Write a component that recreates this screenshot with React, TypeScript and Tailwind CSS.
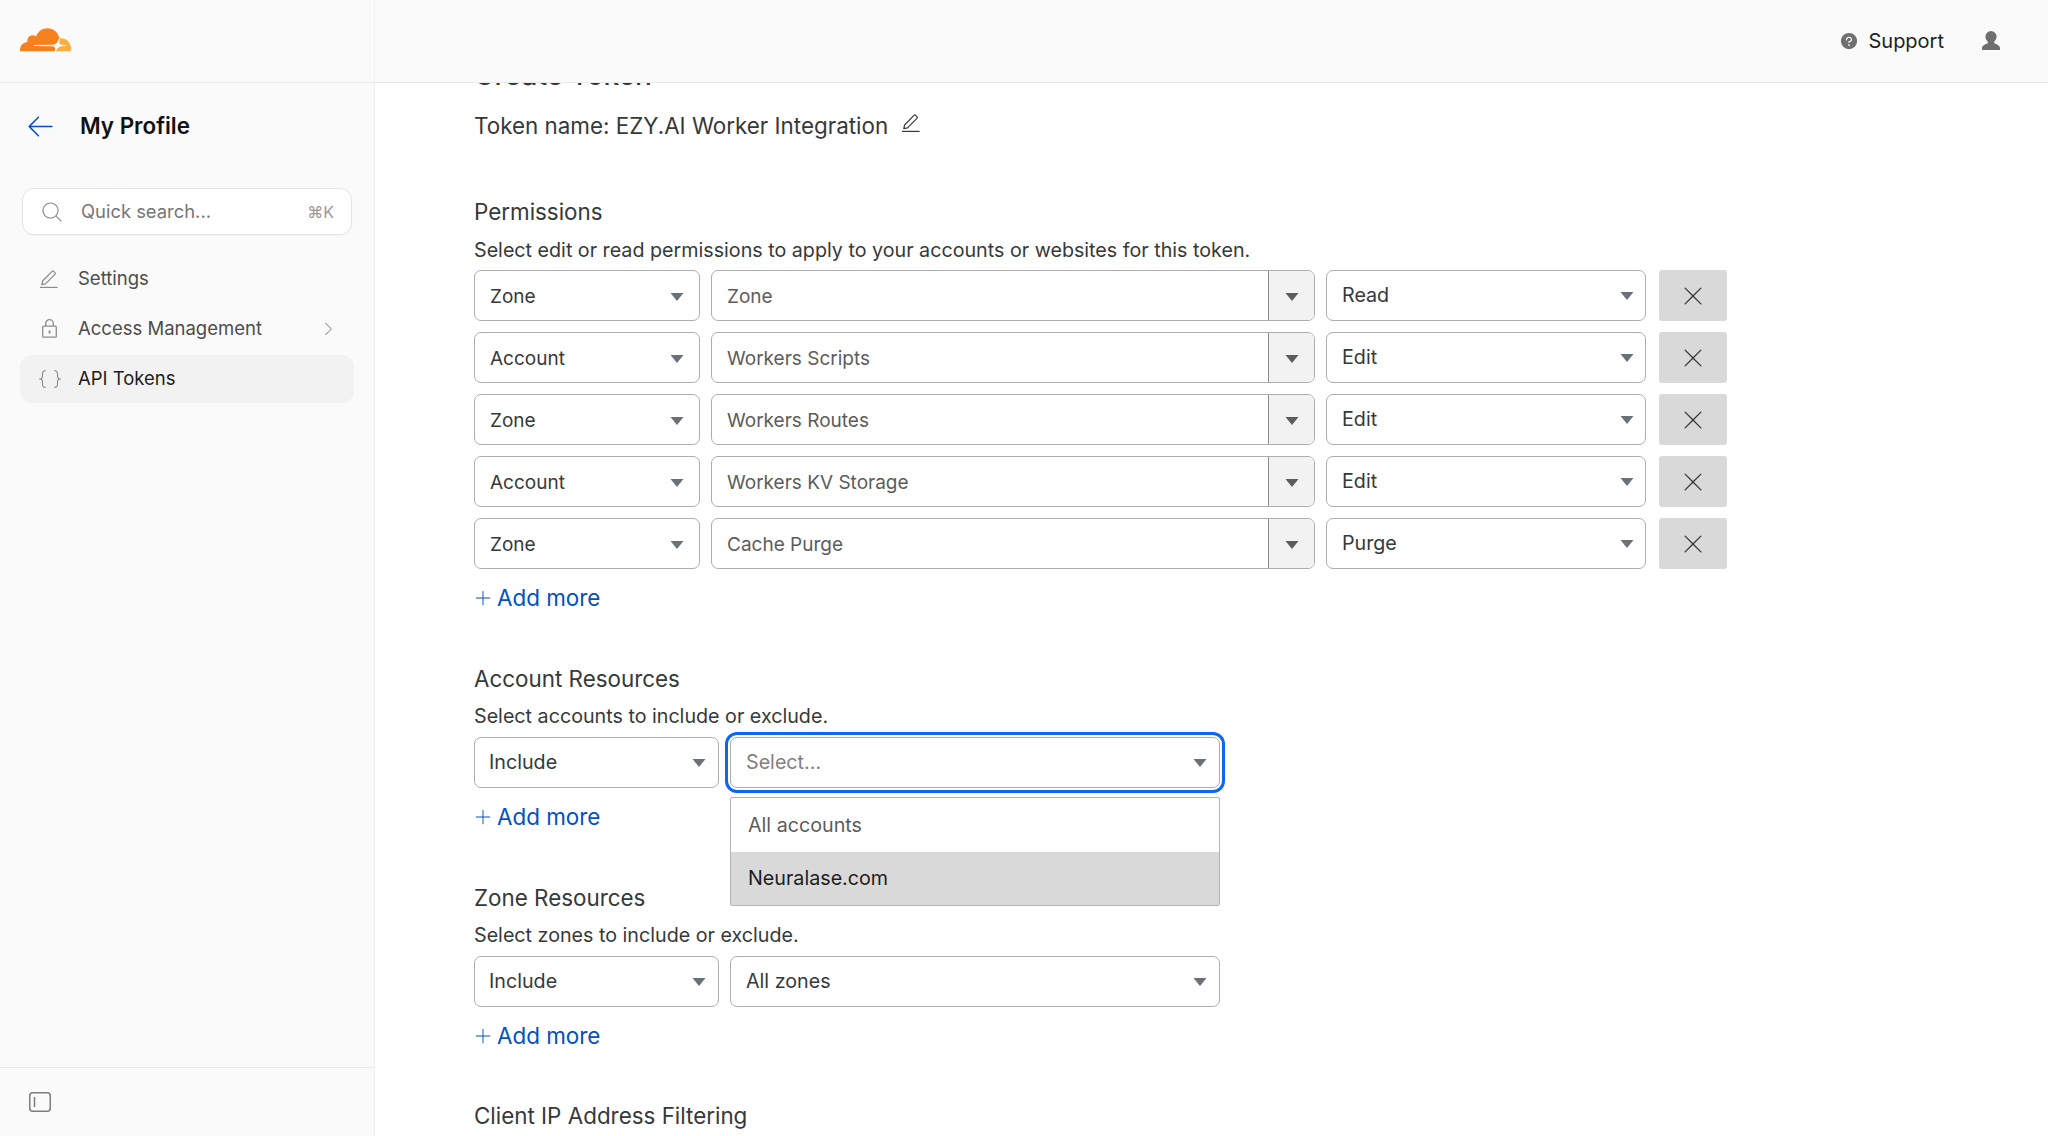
import {
  PiArrowLeftLight,
  PiBracketsCurlyLight,
  PiCaretRightLight,
  PiMagnifyingGlassLight,
  PiPlusLight,
  PiQuestionFill,
  PiXLight,
} from "react-icons/pi";

const permissions = [
  { scope: "Zone", item: "Zone", access: "Read" },
  { scope: "Account", item: "Workers Scripts", access: "Edit" },
  { scope: "Zone", item: "Workers Routes", access: "Edit" },
  { scope: "Account", item: "Workers KV Storage", access: "Edit" },
  { scope: "Zone", item: "Cache Purge", access: "Purge" },
];

function Caret({ className = "fill-[#5c5c5c]" }: { className?: string }) {
  return (
    <svg width="14" height="8" viewBox="0 0 14 8" className={className} aria-hidden>
      <path d="M0.5 0h13L7 8z" />
    </svg>
  );
}

function Pencil({ className }: { className?: string }) {
  return (
    <svg width="18" height="18" viewBox="0 0 18 18" fill="none" stroke="currentColor" strokeWidth="1.2" className={className} aria-hidden>
      <path d="M0 17.4h17.6" />
      <path strokeLinejoin="round" d="M1.8 14.6l.8-3.6 9.4-9.6c.5-.5 1.2-.5 1.7 0l1.2 1.2c.5.5.5 1.2 0 1.7l-9.4 9.6z" />
    </svg>
  );
}

function UserIcon() {
  return (
    <svg width="18" height="19" viewBox="0 0 18 19" className="mb-[2px] fill-[#6f6f6f]" aria-hidden>
      <path d="M9 0a5.6 5.6 0 0 1 5.6 5.6c0 2.2-1 3.9-2.4 5v1.4c0 .7 5.8 1.8 5.8 5.2V19H0v-1.8c0-3.4 5.8-4.5 5.8-5.2v-1.4C4.4 9.5 3.4 7.8 3.4 5.6A5.6 5.6 0 0 1 9 0z" />
    </svg>
  );
}

function LockIcon() {
  return (
    <svg width="15" height="19" viewBox="0 0 15 19" fill="none" stroke="currentColor" strokeWidth="1.3" className="ml-[3px]" aria-hidden>
      <rect x="0.7" y="7.2" width="13.6" height="11" rx="1" />
      <path d="M3.7 7V4.4a3.8 3.8 0 0 1 7.6 0V7" />
      <path d="M7.5 11.5v3" strokeWidth="1.8" />
    </svg>
  );
}

function Logo() {
  return (
    <svg width="51" height="25.5" viewBox="0 6 24 12" aria-hidden>
      <path
        fill="#f6821f"
        d="M16.5088 16.8447c.1475-.5068.0908-.9707-.1553-1.3154-.2246-.3164-.6045-.499-1.0615-.5205l-8.6592-.1123a.1559.1559 0 0 1-.1333-.0713c-.0283-.042-.0351-.0986-.021-.1553.0278-.084.1123-.1484.2036-.1562l8.7359-.1123c1.0351-.0489 2.1601-.8868 2.5537-1.9136l.499-1.3013c.0215-.0561.0293-.1128.0147-.168-.5625-2.5463-2.835-4.4453-5.5499-4.4453-2.5039 0-4.6284 1.6177-5.3876 3.8614-.4927-.3658-1.1187-.5625-1.794-.499-1.2026.119-2.1665 1.083-2.2861 2.2856-.0283.31-.0069.6128.0635.894C1.5683 13.171 0 14.7754 0 16.752c0 .1748.0142.3515.0352.5273.0141.083.0844.1475.1689.1475h15.9814c.0909 0 .1758-.0645.2032-.1553l.12-.4268z"
      />
      <path
        fill="#fbad41"
        d="M19.2656 11.2813c-.0771 0-.1611 0-.2383.0112-.0566 0-.1054.0415-.127.0976l-.3378 1.1744c-.1475.5068-.0918.9707.1543 1.3164.2256.3164.6055.498 1.0625.5195l1.8437.1133c.0557 0 .1055.0263.1329.0703.0283.043.0351.1074.0214.1562-.0283.084-.1132.1485-.204.1553l-1.921.1123c-1.041.0488-2.1582.8867-2.5527 1.914l-.1406.3585c-.0283.0713.0215.1416.0986.1416h6.5977c.0771 0 .1474-.0489.169-.126.1122-.4082.1757-.837.1757-1.2803 0-2.6025-2.125-4.727-4.7344-4.727"
      />
    </svg>
  );
}

function Select({ value, className, muted }: { value: string; className: string; muted?: boolean }) {
  return (
    <div className={`flex h-[51px] items-center justify-between rounded-[7px] border border-[#adadad] bg-white ${className}`}>
      <span className={muted ? "text-[#808080]" : ""}>{value}</span>
      <Caret className="fill-[#6a7178]" />
    </div>
  );
}

function AddMore() {
  return (
    <div className="flex h-[30px] items-center gap-[4px] text-[22.4px] text-[#0051c3]">
      <PiPlusLight className="ml-[-1px] h-[20px] w-[20px]" />
      <span>Add more</span>
    </div>
  );
}

function Heading({ children }: { children: React.ReactNode }) {
  return <div className="flex h-[30px] items-center text-[22.4px] text-[#36393a]">{children}</div>;
}

function NavItem({ icon, label, active, chevron }: { icon: React.ReactNode; label: string; active?: boolean; chevron?: boolean }) {
  return (
    <div
      className={`flex items-center rounded-[12px] pl-[19px] pr-[17px] text-[18.5px] ${
        active ? "h-[48px] bg-[#f2f2f2] text-[#1d1d1d]" : "h-[47px] text-[#4d4d4d]"
      }`}
    >
      <span className="flex w-[39px] items-center text-[#8c8c8c]">{icon}</span>
      <span className="flex-1">{label}</span>
      {chevron && <PiCaretRightLight className="h-[18px] w-[18px] text-[#8c8c8c]" />}
    </div>
  );
}

export default function App() {
  return (
    <div className="flex h-[1136px] w-full flex-col overflow-hidden bg-white font-['Inter',sans-serif] text-[#36393a]">
      <header className="flex h-[83px] shrink-0 border-b border-[#e9e9e9] bg-[#fafafa]">
        <div className="flex w-[375px] shrink-0 items-center border-r border-[#f0f0f0] pb-[3px] pl-[20px]">
          <Logo />
        </div>
        <div className="flex flex-1 items-center justify-end gap-[38px] pr-[48px]">
          <div className="flex items-center gap-[9px] text-[20px] text-[#222]">
            <PiQuestionFill className="h-[20px] w-[20px] text-[#6f6f6f]" />
            <span>Support</span>
          </div>
          <UserIcon />
        </div>
      </header>
      <div className="flex min-h-0 flex-1">
        <aside className="flex w-[375px] shrink-0 flex-col border-r border-[#f0f0f0] bg-[#fafafa]">
          <div className="flex-1 px-[20px]">
            <div className="mt-[27px] flex h-[32px] items-center gap-[23px] pl-[4px] text-[#111]">
              <PiArrowLeftLight className="h-[33px] w-[33px] text-[#0051c3]" />
              <span className="text-[22.4px] font-semibold">My Profile</span>
            </div>
            <div className="mx-[2px] mt-[46px] flex h-[47px] items-center rounded-[12px] border border-[#e5e5e5] bg-white pl-[17px] pr-[17px] shadow-[0_1px_2px_rgba(0,0,0,0.04)]">
              <PiMagnifyingGlassLight className="h-[24px] w-[24px] text-[#8c8c8c]" />
              <span className="ml-[17px] flex-1 text-[18.4px] text-[#767676]">Quick search...</span>
              <span className="text-[16px] text-[#999]">⌘K</span>
            </div>
            <div className="mt-[20px]">
              <NavItem icon={<Pencil className="ml-[1px]" />} label="Settings" />
            </div>
            <div className="mt-[3px]">
              <NavItem icon={<LockIcon />} label="Access Management" chevron />
            </div>
            <div className="mt-[3px]">
              <NavItem icon={<PiBracketsCurlyLight className="ml-[-1px] h-[24px] w-[24px]" />} label="API Tokens" active />
            </div>
          </div>
          <div className="flex h-[69px] shrink-0 items-center border-t border-[#e9e9e9] pl-[29px]">
            <svg width="22" height="20" viewBox="0 0 22 20" fill="none" stroke="#7d7d7d" strokeWidth="1.5" aria-hidden>
              <rect x="0.75" y="0.75" width="20.5" height="18.5" rx="3" />
              <path d="M5.5 5v10" />
            </svg>
          </div>
        </aside>
        <main className="min-w-0 flex-1 overflow-hidden pl-[99px] text-[19.7px]">
          <div className="relative mt-[-28px]">
            <h1 className="flex h-[40px] items-center text-[28px] font-medium text-[#36393a]">Create Token</h1>
            <div className="mt-[16px] flex h-[30px] items-center text-[22.4px]">
              <span>Token name: EZY.AI Worker Integration</span>
              <Pencil className="mb-[6px] ml-[14px]" />
            </div>

            <div className="mt-[56px]">
              <Heading>Permissions</Heading>
            </div>
            <p className="mt-[10px] flex h-[28px] items-center">Select edit or read permissions to apply to your accounts or websites for this token.</p>
            <div className="mt-[5px] flex flex-col gap-[11px]">
              {permissions.map((p) => (
                <div key={p.item} className="flex items-center gap-[11px]">
                  <Select value={p.scope} className="w-[226px] pl-[15px] pr-[15px] pt-[3px] text-[19px]" />
                  <div className="flex h-[51px] w-[604px] overflow-hidden rounded-[7px] border border-[#adadad] bg-white text-[19px]">
                    <span className="flex flex-1 items-center pl-[15px] pt-[3px] text-[#5c5c5c]">{p.item}</span>
                    <span className="flex w-[46px] items-center justify-center border-l border-[#8c8c8c] bg-[#f2f2f2] pt-[3px]">
                      <Caret />
                    </span>
                  </div>
                  <Select value={p.access} className="w-[320px] pl-[15px] pr-[11px]" />
                  <div className="ml-[2px] flex h-[51px] w-[68px] items-center justify-center rounded-[3px] bg-[#d9d9d9]">
                    <PiXLight className="h-[28px] w-[28px] text-[#36393a]" />
                  </div>
                </div>
              ))}
            </div>
            <div className="mt-[14px]">
              <AddMore />
            </div>

            <div className="mt-[51px]">
              <Heading>Account Resources</Heading>
            </div>
            <p className="mt-[9px] flex h-[28px] items-center">Select accounts to include or exclude.</p>
            <div className="relative mt-[6px] flex items-center gap-[11px]">
              <Select value="Include" className="w-[245px] pl-[14px] pr-[12px]" />
              <Select
                value="Select..."
                muted
                className="w-[490px] border-[#4f8fff] pl-[15px] pr-[12px] shadow-[0_0_0_2px_#fff,0_0_0_5px_#0a68f5]"
              />
              <div className="absolute left-[256px] top-[60px] z-10 w-[490px] rounded-[2px] border border-[#b3b3b3] bg-white">
                <div className="flex h-[54px] items-center pl-[17px] pt-[1px] text-[#5c5c5c]">All accounts</div>
                <div className="flex h-[53px] items-center bg-[#d9d9d9] pl-[17px] text-[#1d1d1d]">Neuralase.com</div>
              </div>
            </div>
            <div className="mt-[14px]">
              <AddMore />
            </div>

            <div className="mt-[51px]">
              <Heading>Zone Resources</Heading>
            </div>
            <p className="mt-[9px] flex h-[28px] items-center">Select zones to include or exclude.</p>
            <div className="mt-[6px] flex items-center gap-[11px]">
              <Select value="Include" className="w-[245px] pl-[14px] pr-[12px]" />
              <Select value="All zones" className="w-[490px] pl-[15px] pr-[12px]" />
            </div>
            <div className="mt-[14px]">
              <AddMore />
            </div>

            <div className="mt-[50px]">
              <Heading>Client IP Address Filtering</Heading>
            </div>
          </div>
        </main>
      </div>
    </div>
  );
}
